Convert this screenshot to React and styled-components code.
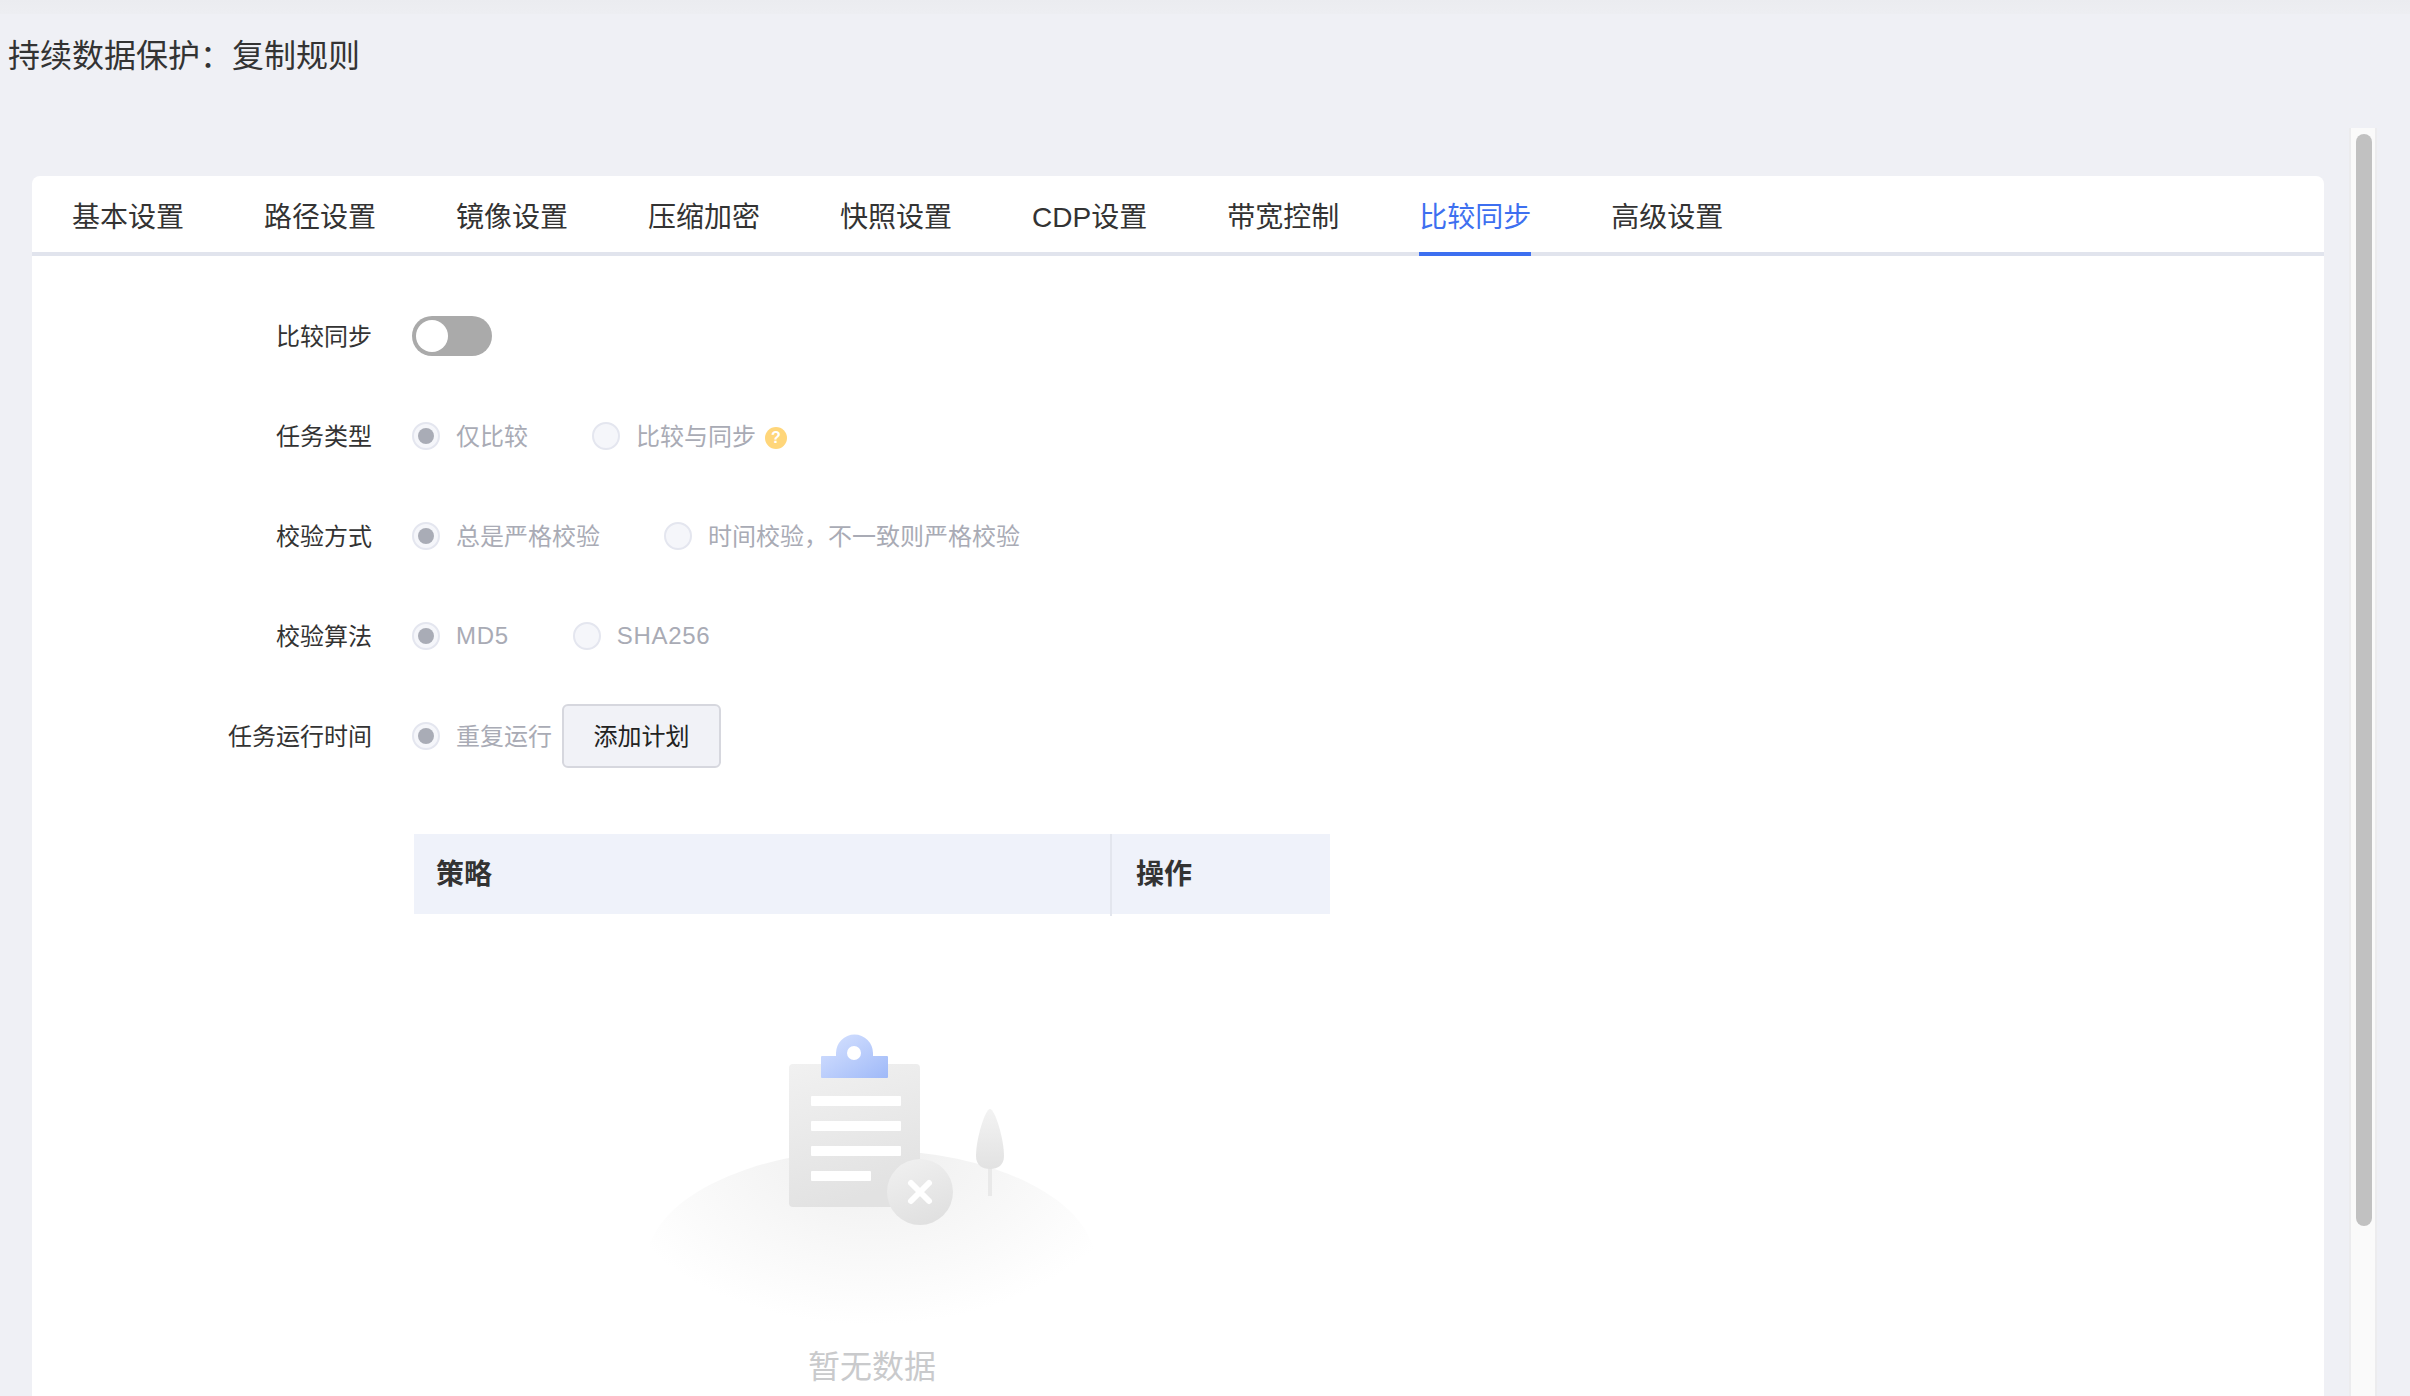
import React from "react";
import styled, { createGlobalStyle } from "styled-components";

const Global = createGlobalStyle`
  html, body { margin: 0; padding: 0; height: 100%; }
  body {
    background: #eff0f5;
    font-family: "Liberation Sans", "Noto Sans CJK SC", sans-serif;
    color: #333;
  }
  #root { height: 100%; }
  * { box-sizing: border-box; }
`;

const Page = styled.div`
  width: 2410px;
  height: 1396px;
  overflow: hidden;
  display: flex;
  flex-direction: column;
  background: #eff0f5;
`;

const TopBand = styled.div`
  flex: none;
  height: 14px;
  background: linear-gradient(#ebecf0, #edeef2);
`;

const Title = styled.h1`
  flex: none;
  margin: 0;
  padding-left: 8px;
  font-size: 32px;
  font-weight: 400;
  line-height: 85px;
  color: #333;
`;

const Body = styled.div`
  flex: 1;
  min-height: 0;
  margin-top: 29px;
  padding-left: 32px;
  display: flex;
  gap: 25px;
`;

const Card = styled.main`
  flex: none;
  width: 2292px;
  margin-top: 48px;
  background: #fff;
  border-radius: 8px 8px 0 0;
  overflow: hidden;
`;

const TabBar = styled.nav`
  height: 80px;
  padding-left: 40px;
  display: flex;
  gap: 80px;
  border-bottom: 4px solid #e1e4ed;
`;

const Tab = styled.div`
  height: 80px;
  line-height: 83px;
  font-size: 28px;
  white-space: nowrap;
  color: ${(p) => (p.$active ? "#3d6ff0" : "#333")};
  border-bottom: 4px solid ${(p) => (p.$active ? "#3d6ff0" : "transparent")};
`;

const Form = styled.section`
  padding-top: 30px;
`;

const Row = styled.div`
  height: 100px;
  display: flex;
  align-items: center;
`;

const Label = styled.label`
  flex: none;
  width: 340px;
  margin-right: 40px;
  padding-bottom: 4px;
  text-align: right;
  font-size: 24px;
  color: #333;
`;

const Toggle = styled.span`
  width: 80px;
  height: 40px;
  padding: 4px;
  border-radius: 20px;
  background: #aaaaaa;
  display: block;
`;

const Knob = styled.span`
  display: block;
  width: 32px;
  height: 32px;
  border-radius: 50%;
  background: #fff;
`;

const Option = styled.span`
  display: flex;
  align-items: center;
  gap: 16px;
  margin-right: ${(p) => p.$gap ?? 64}px;
  font-size: 24px;
  color: #a9abb5;
  white-space: nowrap;
`;

const OptionText = styled.span`
  padding-bottom: ${(p) => (p.$latin ? 0 : 4)}px;
  letter-spacing: ${(p) => (p.$latin ? "0.7px" : "0")};
`;

const Radio = styled.span`
  flex: none;
  width: 28px;
  height: 28px;
  border-radius: 50%;
  background: #f5f6fa;
  border: 2px solid #e4e6ef;
  display: flex;
  align-items: center;
  justify-content: center;
  &::after {
    content: "";
    display: ${(p) => (p.$checked ? "block" : "none")};
    width: 16px;
    height: 16px;
    border-radius: 50%;
    background: #a9acb6;
  }
`;

const Help = styled.span`
  width: 22px;
  height: 22px;
  margin: 4px 0 0 -7px;
  border-radius: 50%;
  background: #ffd67a;
  color: #fff;
  font-size: 16px;
  font-weight: 700;
  line-height: 22px;
  text-align: center;
`;

const Button = styled.button`
  width: 159px;
  height: 64px;
  border: 2px solid #d6d7de;
  border-radius: 6px;
  background: #f1f2f7;
  font: inherit;
  font-size: 24px;
  color: #222;
  padding: 0 0 4px;
`;

const TableHead = styled.div`
  width: 916px;
  height: 80px;
  margin: 48px 0 0 382px;
  display: grid;
  grid-template-columns: 698px 218px;
  background: #eff2fa;
`;

const HeadCell = styled.div`
  padding-left: ${(p) => p.$pad}px;
  font-size: 28px;
  font-weight: 700;
  line-height: 82px;
  color: #333;
  border-right: ${(p) => (p.$divider ? "2px solid #e3e6ee" : "0")};
`;

const Empty = styled.div`
  width: 916px;
  margin-left: 382px;
  padding-top: 111px;
  display: flex;
  flex-direction: column;
  align-items: center;
`;

const EmptyArt = styled.svg`
  display: block;
  width: 444px;
  height: 300px;
`;

const EmptyText = styled.div`
  margin-top: 18px;
  font-size: 32px;
  line-height: 48px;
  color: #c9cacc;
`;

const ScrollTrack = styled.div`
  flex: none;
  width: 28px;
  padding: 6px 3px 0 5px;
  background: #fafafa;
  border-left: 2px solid #ececee;
  border-right: 2px solid #ececee;
`;

const ScrollThumb = styled.div`
  width: 16px;
  height: 1092px;
  border-radius: 8px;
  background: #c1c1c1;
`;

const tabs = ["基本设置", "路径设置", "镜像设置", "压缩加密", "快照设置", "CDP设置", "带宽控制", "比较同步", "高级设置"];

function EmptyIllustration() {
  return (
    <EmptyArt viewBox="650 1025 444 300" aria-hidden="true">
      <defs>
        <radialGradient id="hill" gradientUnits="userSpaceOnUse" cx="0" cy="0" r="1" gradientTransform="translate(871 1150) scale(270 175)">
          <stop offset="0" stopColor="#eeeeee" />
          <stop offset="1" stopColor="#ffffff" />
        </radialGradient>
        <linearGradient id="board" x1="0" y1="0" x2="0.3" y2="1">
          <stop offset="0" stopColor="#f1f1f1" />
          <stop offset="1" stopColor="#e2e2e2" />
        </linearGradient>
        <linearGradient id="clip" x1="0" y1="0" x2="1" y2="1">
          <stop offset="0" stopColor="#d8e3ff" />
          <stop offset="1" stopColor="#9fb9f8" />
        </linearGradient>
        <linearGradient id="badge" x1="0.2" y1="0" x2="0.6" y2="1">
          <stop offset="0" stopColor="#f0f0f0" />
          <stop offset="1" stopColor="#e0e0e0" />
        </linearGradient>
        <linearGradient id="tree" x1="0" y1="0" x2="0" y2="1">
          <stop offset="0" stopColor="#f3f3f3" />
          <stop offset="1" stopColor="#e2e2e2" />
        </linearGradient>
      </defs>
      <ellipse cx="871" cy="1265" rx="225" ry="115" fill="url(#hill)" />
      <rect x="789" y="1064" width="131" height="143" rx="4" fill="url(#board)" />
      <path d="M821 1057a1 1 0 0 1 1-1h14v-3a18.500 18.500 0 0 1 37 0v3h14a1 1 0 0 1 1 1v20a1 1 0 0 1-1 1h-65a1 1 0 0 1-1-1z" fill="url(#clip)" />
      <circle cx="854" cy="1053" r="7" fill="#fff" />
      <rect x="811" y="1096" width="90" height="10" rx="1" fill="#fff" />
      <rect x="811" y="1121" width="90" height="10" rx="1" fill="#fff" />
      <rect x="811" y="1146" width="90" height="10" rx="1" fill="#fff" />
      <rect x="811" y="1171" width="60" height="10" rx="1" fill="#fff" />
      <circle cx="920" cy="1192" r="33" fill="url(#badge)" />
      <path d="M911 1183l18 18M929 1183l-18 18" stroke="#fff" strokeWidth="6" strokeLinecap="round" fill="none" />
      <rect x="988" y="1160" width="4" height="36" fill="#e9e9e9" />
      <path d="M990 1109c5 0 14 30 14 47 0 9-6 13-14 13s-14-4-14-13c0-17 9-47 14-47z" fill="url(#tree)" />
    </EmptyArt>
  );
}

export default function App() {
  return (
    <Page>
      <Global />
      <TopBand />
      <Title>持续数据保护：复制规则</Title>
      <Body>
        <Card>
          <TabBar>
            {tabs.map((t) => (
              <Tab key={t} $active={t === "比较同步"}>{t}</Tab>
            ))}
          </TabBar>
          <Form>
            <Row>
              <Label>比较同步</Label>
              <Toggle><Knob /></Toggle>
            </Row>
            <Row>
              <Label>任务类型</Label>
              <Option><Radio $checked /><OptionText>仅比较</OptionText></Option>
              <Option><Radio /><OptionText>比较与同步</OptionText><Help>?</Help></Option>
            </Row>
            <Row>
              <Label>校验方式</Label>
              <Option><Radio $checked /><OptionText>总是严格校验</OptionText></Option>
              <Option><Radio /><OptionText>时间校验，不一致则严格校验</OptionText></Option>
            </Row>
            <Row>
              <Label>校验算法</Label>
              <Option><Radio $checked /><OptionText $latin>MD5</OptionText></Option>
              <Option><Radio /><OptionText $latin>SHA256</OptionText></Option>
            </Row>
            <Row>
              <Label>任务运行时间</Label>
              <Option $gap={10}><Radio $checked /><OptionText>重复运行</OptionText></Option>
              <Button>添加计划</Button>
            </Row>
          </Form>
          <TableHead>
            <HeadCell $pad={22} $divider>策略</HeadCell>
            <HeadCell $pad={24}>操作</HeadCell>
          </TableHead>
          <Empty>
            <EmptyIllustration />
            <EmptyText>暂无数据</EmptyText>
          </Empty>
        </Card>
        <ScrollTrack>
          <ScrollThumb />
        </ScrollTrack>
      </Body>
    </Page>
  );
}
